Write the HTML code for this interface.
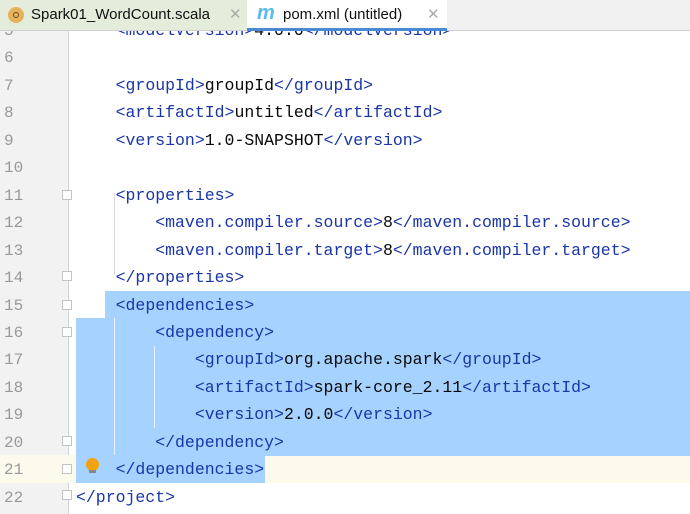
<!DOCTYPE html>
<html><head><style>
body{margin:0;width:690px;height:514px;overflow:hidden;background:#fff;position:relative;font-family:"Liberation Mono",monospace}
.tabs{position:absolute;left:0;top:0;width:690px;height:31px;background:#f0f0f0;border-bottom:1px solid #d0d0d0;box-sizing:border-box;z-index:5}
.t1{position:absolute;left:0;top:0;width:247px;height:30px;background:#e4ecdc;z-index:6}
.t2{position:absolute;left:247px;top:0;width:200px;height:31px;background:#fff;border-bottom:3px solid #4a8ad4;box-sizing:border-box;z-index:6}
.tt{position:absolute;top:6px;font:15px "Liberation Sans",sans-serif;color:#111}
.x{position:absolute;top:5px;font:15px "Liberation Sans",sans-serif;color:#aaa}
.gut{position:absolute;left:0;top:31px;width:68px;height:483px;background:#f2f2f2;border-right:1px solid #d4d4d4}
.ln{position:absolute;left:0;width:40px;padding-left:4px;font-size:16px;color:#999;line-height:27.45px}
.code{position:absolute;left:76px;font-size:16.5px;line-height:27.45px;white-space:pre;color:#080808}
.g{color:#1a35a8}
.sel{position:absolute;background:#a6d2ff}
.fold{position:absolute;left:62px;width:10px;height:10px;border:1px solid #c4c4c4;background:#fff;box-sizing:border-box}
.guide{position:absolute;width:1px;background:#d8d8d8}
</style></head><body>
<div class="tabs"></div>
<div class="t1"><div style="position:absolute;left:8px;top:7px;width:16px;height:16px;border-radius:50%;background:#e6b25e"></div><div style="position:absolute;left:13px;top:12px;width:4px;height:4px;border:1.5px solid #6b4a1a;border-radius:50%"></div><span class="tt" style="left:31px">Spark01_WordCount.scala</span><span class="x" style="left:229px">✕</span></div>
<div class="t2"><span style="position:absolute;left:10px;top:2px;font:italic bold 20px 'Liberation Sans',sans-serif;color:#5bbce8">m</span><span class="tt" style="left:36px">pom.xml (untitled)</span><span class="x" style="left:180px">✕</span></div>
<div class="gut"></div>
<div style="position:absolute;left:0;top:455px;width:690px;height:28px;background:#fcfaed"></div>
<div class="sel" style="left:105px;top:291px;width:585px;height:28px"></div>
<div class="sel" style="left:76px;top:318px;width:614px;height:138px"></div>
<div class="sel" style="left:76px;top:455px;width:189px;height:28px"></div>
<div class="guide" style="left:114px;top:193px;height:82px"></div>
<div class="guide" style="left:114px;top:318px;height:137px;background:#e8f2ff"></div>
<div class="guide" style="left:154px;top:346px;height:82px;background:#e8f2ff"></div>
<div class="fold" style="top:190px"></div><div class="fold" style="top:271px"></div><div class="fold" style="top:300px"></div><div class="fold" style="top:327px"></div><div class="fold" style="top:436px"></div><div class="fold" style="top:464px"></div><div class="fold" style="top:490px"></div>
<div style="position:absolute;left:86px;top:458px;width:13px;height:13px;border-radius:50%;background:#f0a30a"></div>
<div style="position:absolute;left:89px;top:470px;width:7px;height:3px;background:#888"></div>
<div class="ln" style="top:18px">5<br>6<br>7<br>8<br>9<br>10<br>11<br>12<br>13<br>14<br>15<br>16<br>17<br>18<br>19<br>20<br>21<br>22</div>
<div class="code" style="top:17px">    <span class="g">&lt;modelVersion&gt;</span>4.0.0<span class="g">&lt;/modelVersion&gt;</span>

    <span class="g">&lt;groupId&gt;</span>groupId<span class="g">&lt;/groupId&gt;</span>
    <span class="g">&lt;artifactId&gt;</span>untitled<span class="g">&lt;/artifactId&gt;</span>
    <span class="g">&lt;version&gt;</span>1.0-SNAPSHOT<span class="g">&lt;/version&gt;</span>

    <span class="g">&lt;properties&gt;</span>
        <span class="g">&lt;maven.compiler.source&gt;</span>8<span class="g">&lt;/maven.compiler.source&gt;</span>
        <span class="g">&lt;maven.compiler.target&gt;</span>8<span class="g">&lt;/maven.compiler.target&gt;</span>
    <span class="g">&lt;/properties&gt;</span>
    <span class="g">&lt;dependencies&gt;</span>
        <span class="g">&lt;dependency&gt;</span>
            <span class="g">&lt;groupId&gt;</span>org.apache.spark<span class="g">&lt;/groupId&gt;</span>
            <span class="g">&lt;artifactId&gt;</span>spark-core_2.11<span class="g">&lt;/artifactId&gt;</span>
            <span class="g">&lt;version&gt;</span>2.0.0<span class="g">&lt;/version&gt;</span>
        <span class="g">&lt;/dependency&gt;</span>
    <span class="g">&lt;/dependencies&gt;</span>
<span class="g">&lt;/project&gt;</span></div>
</body></html>
